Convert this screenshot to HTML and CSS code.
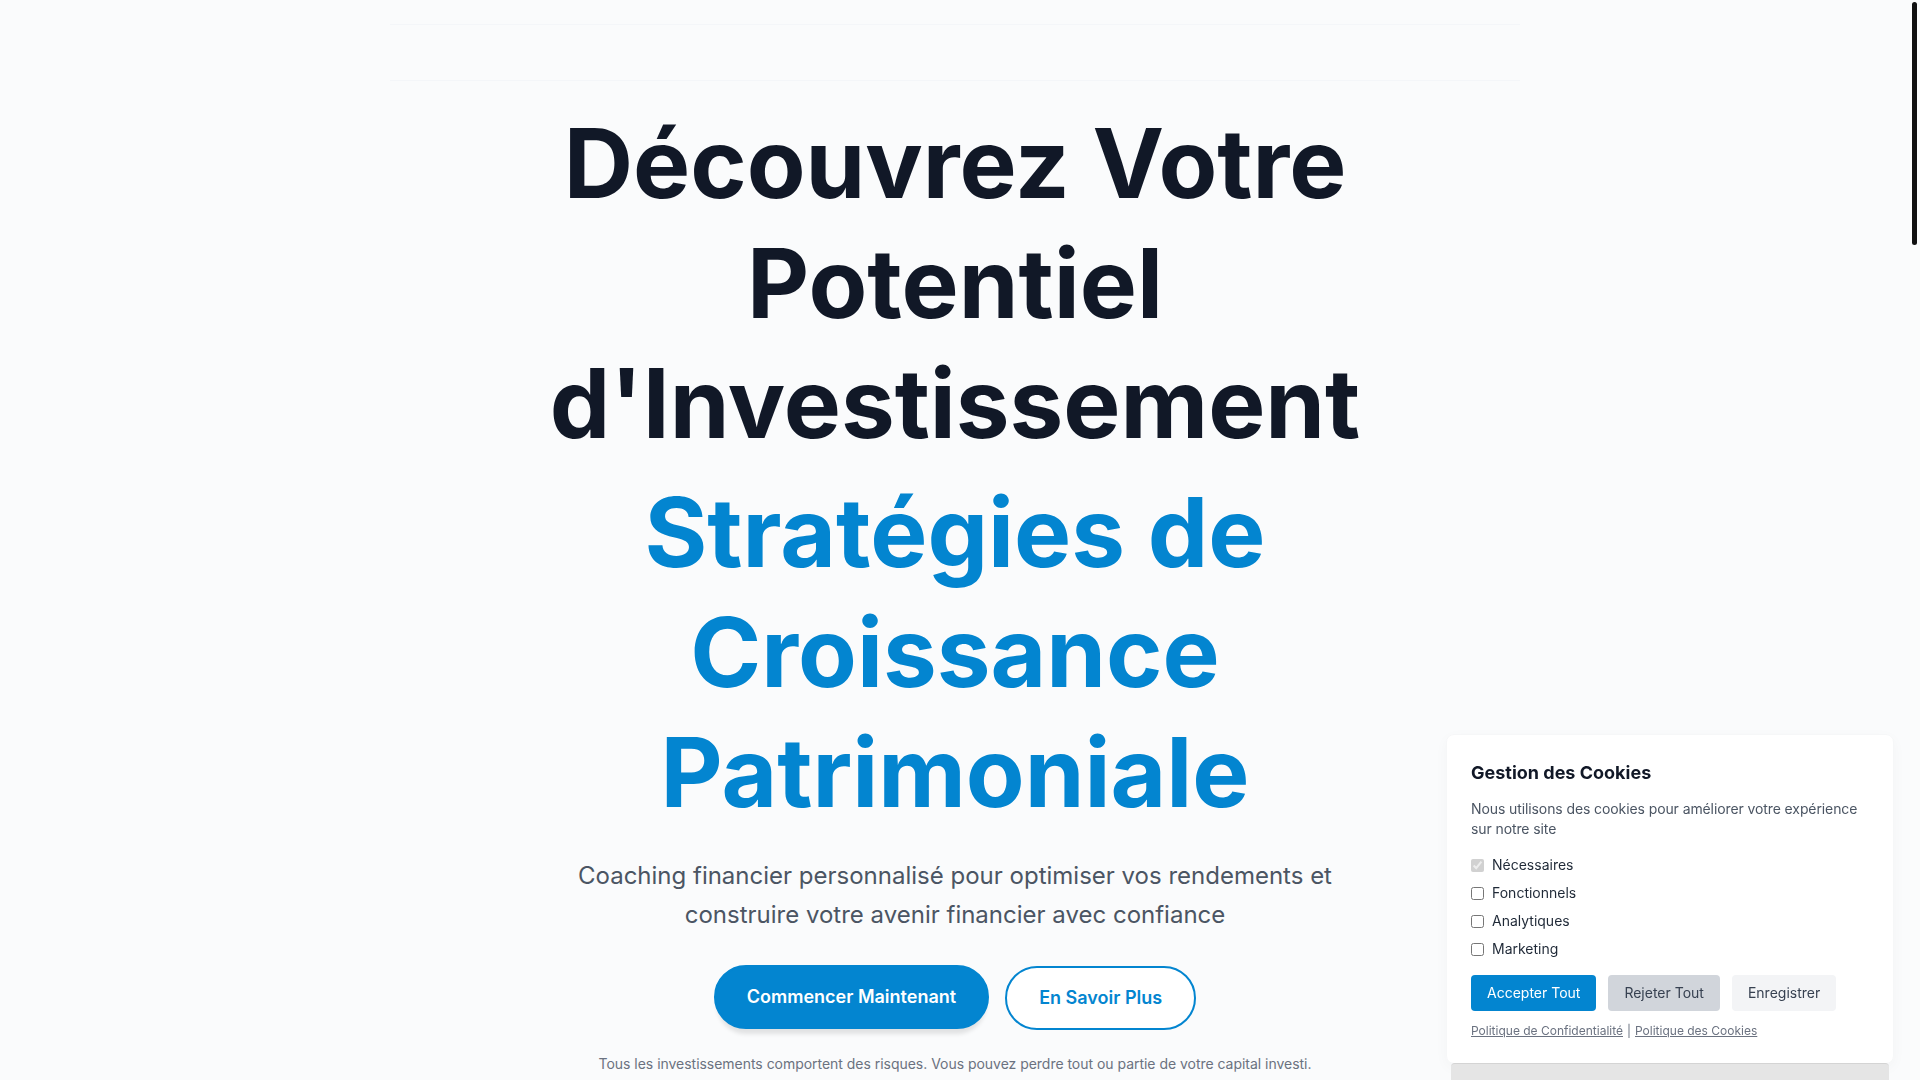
FILE: index.html
```html
<!DOCTYPE html>
<html lang="fr">
<head>
<meta charset="utf-8">
<title>Découvrez Votre Potentiel d'Investissement</title>
<link rel="stylesheet" href="styles.css">
</head>
<body>
<header class="site-header">
  <div class="nav-ghost"></div>
</header>
<main>
  <section class="hero">
    <h1 class="hero-title">
      <span class="line">Découvrez Votre</span>
      <span class="line">Potentiel</span>
      <span class="line">d'Investissement</span>
    </h1>
    <h2 class="hero-accent">
      <span class="line">Stratégies de</span>
      <span class="line">Croissance</span>
      <span class="line">Patrimoniale</span>
    </h2>
    <p class="hero-text">Coaching financier personnalisé pour optimiser vos rendements et construire votre avenir financier avec confiance</p>
    <div class="hero-actions">
      <a class="btn btn-primary" href="#">Commencer Maintenant</a>
      <a class="btn btn-outline" href="#">En Savoir Plus</a>
    </div>
    <p class="hero-disclaimer">Tous les investissements comportent des risques. Vous pouvez perdre tout ou partie de votre capital investi.</p>
  </section>
</main>

<div class="cookie-panel">
  <h3 class="cookie-title">Gestion des Cookies</h3>
  <p class="cookie-text">Nous utilisons des cookies pour améliorer votre expérience sur notre site</p>
  <div class="cookie-options">
    <label class="cookie-option"><input type="checkbox" checked disabled><span>Nécessaires</span></label>
    <label class="cookie-option"><input type="checkbox"><span>Fonctionnels</span></label>
    <label class="cookie-option"><input type="checkbox"><span>Analytiques</span></label>
    <label class="cookie-option"><input type="checkbox"><span>Marketing</span></label>
  </div>
  <div class="cookie-buttons">
    <button class="cbtn cbtn-accept">Accepter Tout</button>
    <button class="cbtn cbtn-reject">Rejeter Tout</button>
    <button class="cbtn cbtn-save">Enregistrer</button>
  </div>
  <div class="cookie-links">
    <a href="#">Politique de Confidentialité</a><span class="sep">|</span><a href="#">Politique des Cookies</a>
  </div>
</div>
<div class="cookie-under"></div>

<div class="scrollbar"><div class="scrollbar-thumb"></div></div>
</body>
</html>
```

FILE: styles.css
```css
* {
  box-sizing: border-box;
}

html {
  overflow: hidden;
}

body {
  margin: 0;
  padding-right: 10px;
  background: #fafbfc;
  font-family: Inter, "Noto Sans", "Liberation Sans", sans-serif;
  color: #111827;
}

.site-header {
  padding-top: 24px;
}

.nav-ghost {
  height: 57px;
  max-width: 1130px;
  margin: 0 auto;
  border-top: 1px solid rgba(220, 225, 235, 0.16);
  border-bottom: 1px solid rgba(220, 225, 235, 0.16);
}

.hero {
  margin-top: 22px;
  display: flex;
  flex-direction: column;
  align-items: center;
  text-align: center;
}

.hero-title,
.hero-accent {
  margin: 0;
  font-size: 96px;
  line-height: 120px;
  font-weight: 700;
}

.hero-title {
  color: #111827;
}

.hero-accent {
  margin-top: 9px;
  color: #0385d0;
}

.line {
  display: block;
}

.hero-text {
  margin: 24px 0 0;
  max-width: 780px;
  font-size: 24px;
  line-height: 39px;
  color: #4b5563;
}

.hero-actions {
  margin-top: 32px;
  display: flex;
  gap: 16px;
}

.btn {
  display: inline-block;
  padding: 16px 32px;
  border: 2px solid #0385d0;
  border-radius: 9999px;
  font-size: 18px;
  line-height: 28px;
  font-weight: 600;
  text-decoration: none;
}

.btn-primary {
  padding: 16px 31px;
  background: #0385d0;
  color: #ffffff;
  box-shadow: 0 8px 4px -3px rgba(0, 0, 0, 0.1);
  transform: translateY(-1px);
}

.btn-outline {
  background: #ffffff;
  color: #0385d0;
}

.hero-disclaimer {
  margin: 24px 0 0;
  font-size: 14px;
  line-height: 20px;
  letter-spacing: -0.03px;
  color: #6b7280;
}

.cookie-panel {
  position: fixed;
  right: 26px;
  bottom: 16px;
  width: 448px;
  padding: 24px;
  background: #ffffff;
  border: 1px solid #f6f7f8;
  border-radius: 8px;
  box-shadow: 0 4px 14px rgba(0, 0, 0, 0.03);
  z-index: 10;
}

.cookie-title {
  margin: 0;
  font-size: 18px;
  line-height: 28px;
  font-weight: 700;
  color: #111827;
}

.cookie-text {
  margin: 12px 0 0;
  font-size: 14px;
  line-height: 20px;
  letter-spacing: -0.1px;
  color: #4b5563;
}

.cookie-options {
  margin-top: 16px;
  display: flex;
  flex-direction: column;
  gap: 8px;
}

.cookie-option {
  display: flex;
  align-items: center;
  font-size: 14px;
  line-height: 20px;
  color: #1f2937;
}

.cookie-option input {
  margin: 0;
  width: 13px;
  height: 13px;
}

.cookie-option span {
  margin-left: 8px;
}

.cookie-buttons {
  margin-top: 16px;
  display: flex;
  gap: 12px;
}

.cbtn {
  padding: 8px 16px;
  border: none;
  border-radius: 4px;
  font-family: inherit;
  font-size: 14px;
  line-height: 20px;
}

.cbtn-accept {
  background: #0385d0;
  color: #ffffff;
}

.cbtn-reject {
  background: #d1d5db;
  color: #374151;
}

.cbtn-save {
  background: #f3f4f6;
  color: #374151;
}

.cookie-links {
  margin-top: 12px;
  font-size: 12px;
  line-height: 16px;
  color: #6b7280;
}

.cookie-links a {
  color: #6b7280;
}

.cookie-links .sep {
  margin: 0 4px;
}

.cookie-under {
  position: fixed;
  left: 1451px;
  width: 438px;
  bottom: 0;
  height: 17px;
  background: #e5e5e5;
  border-top: 1px solid #d4d4d4;
  border-radius: 4px 4px 0 0;
  z-index: 11;
}

.scrollbar {
  position: fixed;
  top: 0;
  right: 0;
  width: 10px;
  height: 100%;
  background: #fbfcfc;
  z-index: 20;
}

.scrollbar-thumb {
  margin: 2px 3px 0 2px;
  height: 243px;
  background: #111111;
  border-radius: 3px;
}
```
